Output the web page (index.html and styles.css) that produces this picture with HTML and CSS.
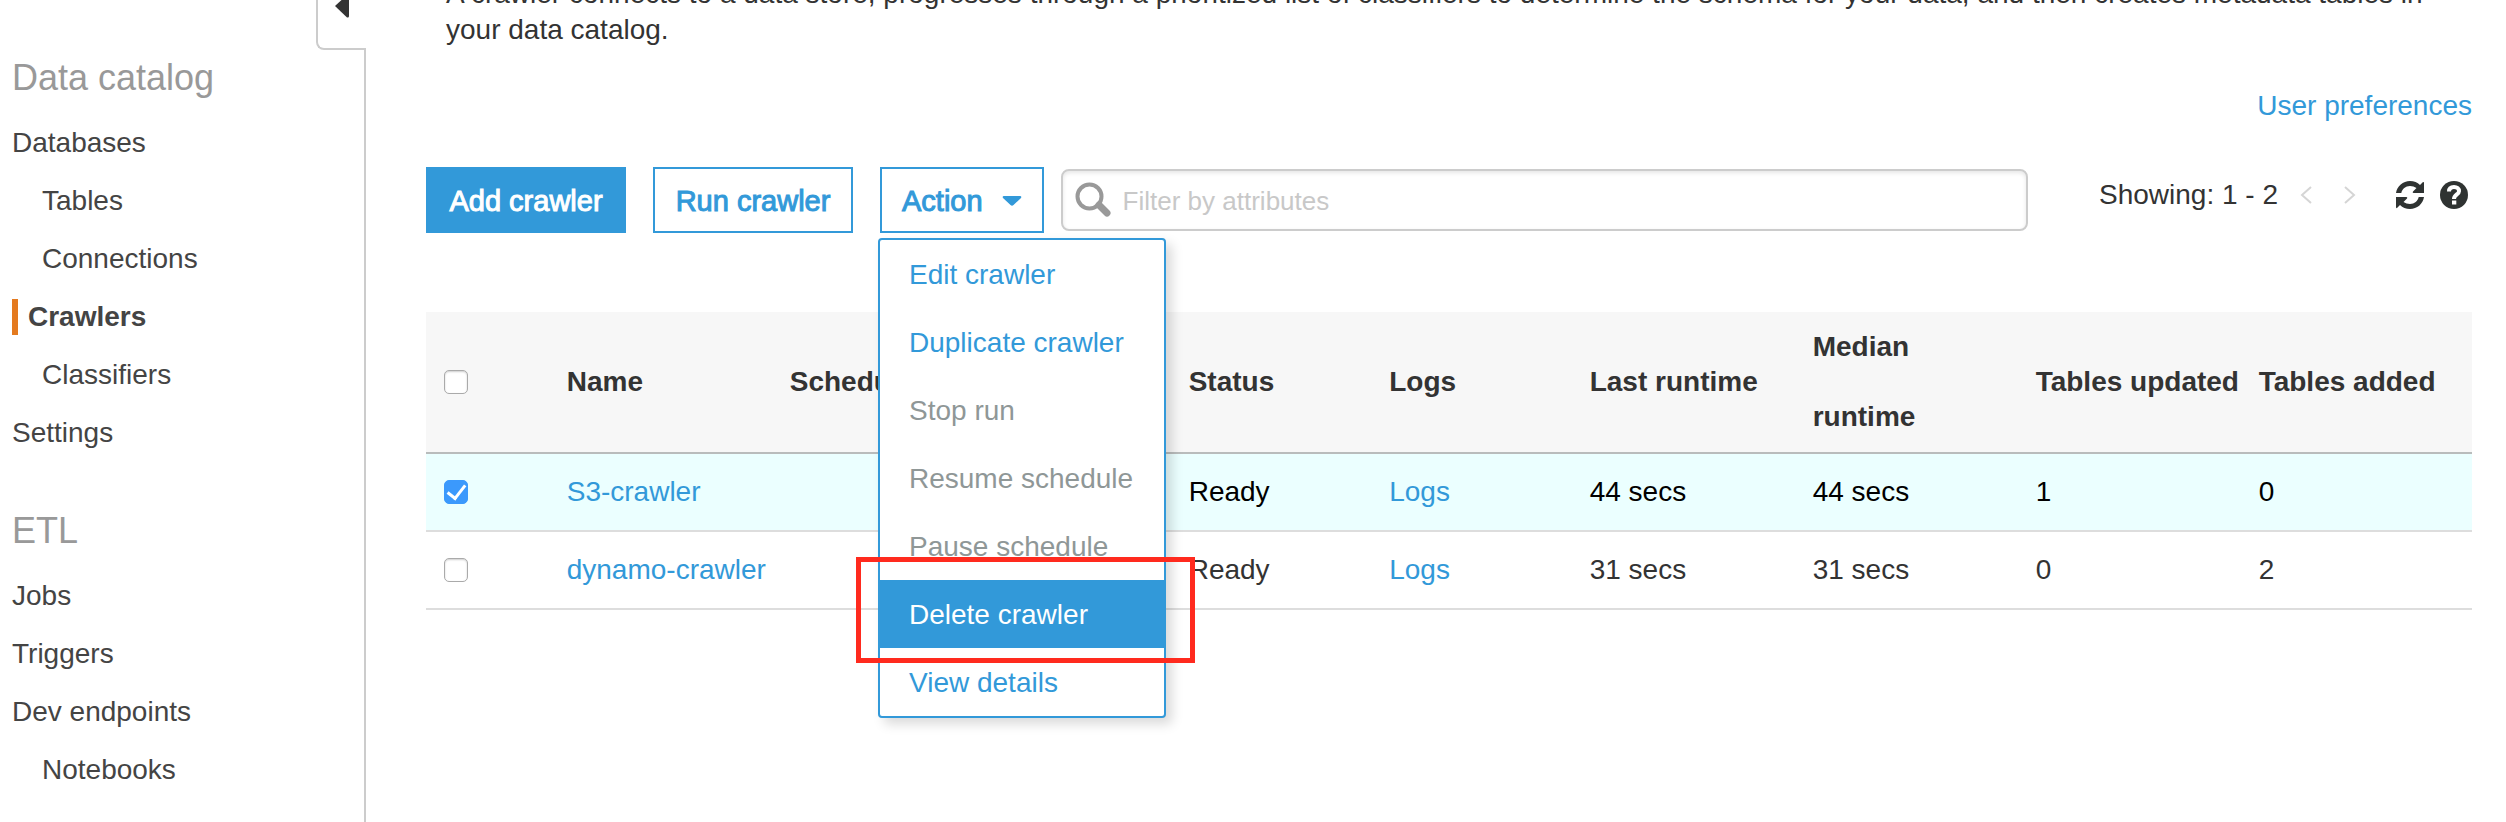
FILE: index.html
```html
<!DOCTYPE html>
<html lang="en">
<head>
<meta charset="utf-8">
<title>Crawlers</title>
<link rel="stylesheet" href="styles.css">
</head>
<body>
<div class="app">
  <aside class="sidebar">
    <div class="sidebar-top">
      <button class="collapse" type="button" aria-label="Collapse navigation">
        <svg width="14" height="24" viewBox="0 0 14 24"><path d="M0 12 12 1Q14 0 14 2V22Q14 24 12 23.500Z" fill="#333"/></svg>
      </button>
    </div>
    <nav class="nav">
      <h2 class="nav-title">Data catalog</h2>
      <ul class="nav-list">
        <li><a href="#databases">Databases</a></li>
        <li class="sub"><a href="#tables">Tables</a></li>
        <li class="sub"><a href="#connections">Connections</a></li>
        <li class="current"><a href="#crawlers" aria-current="page">Crawlers</a></li>
        <li class="sub"><a href="#classifiers">Classifiers</a></li>
        <li><a href="#settings">Settings</a></li>
      </ul>
      <h2 class="nav-title">ETL</h2>
      <ul class="nav-list">
        <li><a href="#jobs">Jobs</a></li>
        <li><a href="#triggers">Triggers</a></li>
        <li><a href="#dev-endpoints">Dev endpoints</a></li>
        <li class="sub"><a href="#notebooks">Notebooks</a></li>
      </ul>
    </nav>
  </aside>

  <main class="main">
    <p class="description">A crawler connects to a data store, progresses through a prioritized list of classifiers to determine the schema for your data, and then creates metadata tables in your data catalog.</p>
    <div class="preferences"><a href="#preferences">User preferences</a></div>

    <div class="toolbar">
      <button class="btn btn-primary" type="button">Add crawler</button>
      <button class="btn" type="button">Run crawler</button>
      <div class="action">
        <button class="btn btn-action" type="button" aria-expanded="true">Action
          <svg width="20" height="10" viewBox="0 0 20 10"><path d="M2 0H18Q20 0 19 2L11.500 9Q10 10.500 8.500 9L1 2Q0 0 2 0Z" fill="currentColor"/></svg>
        </button>
        <ul class="menu">
          <li><button type="button">Edit crawler</button></li>
          <li><button type="button">Duplicate crawler</button></li>
          <li><button type="button" disabled>Stop run</button></li>
          <li><button type="button" disabled>Resume schedule</button></li>
          <li><button type="button" disabled>Pause schedule</button></li>
          <li class="marked"><button class="active" type="button">Delete crawler</button></li>
          <li><button type="button">View details</button></li>
        </ul>
      </div>
      <label class="search">
        <svg width="36" height="36" viewBox="0 0 36 36" fill="none" stroke="#999"><circle cx="14.500" cy="14.500" r="12" stroke-width="4"/><path d="M24 23 32 31" stroke-width="7" stroke-linecap="round"/></svg>
        <input type="text" placeholder="Filter by attributes" aria-label="Filter by attributes">
      </label>
      <div class="pager">
        <span>Showing: 1 - 2</span>
        <div class="pager-arrows">
          <button type="button" aria-label="Previous page"><svg width="12" height="20" viewBox="0 0 12 20"><path d="M11 2 2 10 11 18" fill="none" stroke="#d5d5d5" stroke-width="2"/></svg></button>
          <button type="button" aria-label="Next page"><svg width="12" height="20" viewBox="0 0 12 20"><path d="M1 2 10 10 1 18" fill="none" stroke="#d5d5d5" stroke-width="2"/></svg></button>
        </div>
        <div class="pager-tools">
          <button type="button" aria-label="Refresh"><svg width="28" height="28" viewBox="0 0 28 28" fill="#2f3332"><path d="M0 12C1 5 7 0 14 0c4 0 7.500 1.500 10 4l3-3q1-.5 1 1V12H17.500q-1.500-.5-.5-1.500l3.500-3.500C18.500 5.800 16.500 5 14 5 9.500 5 6.200 8 5.300 12Z"/><path d="M28 16C27 23 21 28 14 28c-4 0-7.500-1.500-10-4l-3 3q-1 .5-1-1V16H10.500q1.500.5.5 1.500l-3.500 3.500C9.500 22.200 11.500 23 14 23c4.500 0 7.800-3 8.700-7Z"/></svg></button>
          <button type="button" aria-label="Help"><svg width="28" height="28" viewBox="0 0 28 28"><circle cx="14" cy="14" r="14" fill="#2f3332"/><path d="M9 10.500C9 7.500 11 6 14 6s5 1.600 5 4.200c0 3.200-5 3.300-5 7.800" fill="none" stroke="#fff" stroke-width="4"/><path d="M12 19.500h4.300v4H12z" fill="#fff"/></svg></button>
        </div>
      </div>
    </div>

    <table class="crawlers">
      <colgroup>
        <col class="c-check"><col class="c-wide"><col class="c-schedule"><col class="c-mid"><col class="c-mid"><col class="c-wide"><col class="c-wide"><col class="c-wide"><col>
      </colgroup>
      <thead>
        <tr>
          <th><input type="checkbox" aria-label="Select all crawlers"></th>
          <th>Name</th><th>Schedule</th><th>Status</th><th>Logs</th><th>Last runtime</th><th>Median<br>runtime</th><th>Tables updated</th><th>Tables added</th>
        </tr>
      </thead>
      <tbody>
        <tr class="selected">
          <td><input type="checkbox" aria-label="Select S3-crawler" checked></td>
          <td><a href="#s3-crawler">S3-crawler</a></td><td></td><td>Ready</td><td><a href="#s3-logs">Logs</a></td><td>44 secs</td><td>44 secs</td><td>1</td><td>0</td>
        </tr>
        <tr>
          <td><input type="checkbox" aria-label="Select dynamo-crawler"></td>
          <td><a href="#dynamo-crawler">dynamo-crawler</a></td><td></td><td>Ready</td><td><a href="#dynamo-logs">Logs</a></td><td>31 secs</td><td>31 secs</td><td>0</td><td>2</td>
        </tr>
      </tbody>
    </table>
  </main>
</div>
</body>
</html>
```
FILE: styles.css
```css
* {
  box-sizing: border-box;
}

body {
  margin: 0;
  overflow: hidden;
  background: #fff;
  color: #333;
  font: 28px/36px "Liberation Sans", Arial, sans-serif;
}

a {
  color: #3299d9;
  text-decoration: none;
}

button {
  margin: 0;
  padding: 0;
  border: 0;
  background: none;
  color: inherit;
  font: inherit;
}

svg {
  display: block;
  flex: none;
}

ul {
  margin: 0;
  padding: 0;
  list-style: none;
}

.app {
  display: flex;
  min-height: 100vh;
}

/* Sidebar */
.sidebar {
  display: flex;
  flex: none;
  flex-direction: column;
  width: 366px;
}

.sidebar-top {
  display: flex;
  justify-content: flex-end;
}

.collapse {
  display: flex;
  justify-content: center;
  width: 50px;
  height: 50px;
  border: 2px solid #ccc;
  border-width: 0 0 2px 2px;
  border-bottom-left-radius: 8px;
}

.collapse svg {
  margin-top: -6px;
}

.nav {
  flex: 1;
  padding: 6px 12px 0;
  border-right: 2px solid #ccc;
}

.nav-title {
  margin: 0 0 14px;
  color: #999;
  font-size: 36px;
  font-weight: 400;
  line-height: 44px;
}

.nav-list {
  line-height: 58px;
}

.nav-list + .nav-title {
  margin-top: 47px;
}

.nav-list a {
  color: #444;
}

.sub {
  padding-left: 30px;
}

.current {
  display: flex;
  align-items: center;
  gap: 10px;
  font-weight: 700;
}

.current::before {
  width: 6px;
  height: 36px;
  background: #e47a1f;
  content: "";
}

/* Main column */
.main {
  display: flow-root;
  flex: 1;
  min-width: 0;
  padding: 0 34px 0 60px;
}

.description {
  margin: -24px 0 40px;
  padding: 0 20px;
}

.preferences {
  text-align: right;
}

.toolbar {
  display: flex;
  align-items: center;
  gap: 27px;
  margin: 43px 0 79px;
}

.btn {
  min-width: 200px;
  height: 66px;
  padding-top: 2px;
  border: 2px solid #3299d9;
  background: #fff;
  color: #3299d9;
  font-size: 29px;
  -webkit-text-stroke: 1px;
}

.btn-primary {
  background: #3299d9;
  color: #fff;
}

.action {
  position: relative;
}

.btn-action {
  display: flex;
  align-items: center;
  gap: 19px;
  min-width: 0;
  padding: 2px 20px 0;
}

.menu {
  position: absolute;
  z-index: 2;
  top: 71px;
  left: -2px;
  min-width: 288px;
  border: 2px solid #3299d9;
  border-radius: 4px;
  background: #fff;
  box-shadow: 6px 6px 12px rgba(0, 0, 0, 0.15);
}

.menu button {
  display: block;
  width: 100%;
  height: 68px;
  padding: 2px 28px 0 29px;
  color: #3299d9;
  text-align: left;
  white-space: nowrap;
}

.menu button:disabled {
  color: #8f9797;
}

.menu .active {
  background: #3299d9;
  color: #fff;
}

.marked {
  position: relative;
}

.marked::after {
  position: absolute;
  inset: -23px -31px -15px -24px;
  border: 5px solid #ff2a1e;
  content: "";
  pointer-events: none;
}

.search {
  display: flex;
  flex: 1;
  align-items: center;
  gap: 12px;
  height: 62px;
  margin-left: -10px;
  padding: 0 12px;
  border: 2px solid #ccc;
  border-radius: 8px;
  box-shadow: inset 0 2px 4px rgba(0, 0, 0, 0.1);
}

.search input {
  flex: 1;
  min-width: 0;
  padding: 2px 0 0;
  border: 0;
  outline: 0;
  background: none;
  color: #333;
  font: inherit;
  font-size: 26px;
}

.search input::placeholder {
  color: #c8c8c8;
  opacity: 1;
}

.pager {
  display: flex;
  align-items: center;
  margin-left: 44px;
  padding: 0 4px 10px 0;
  white-space: nowrap;
}

.pager-arrows {
  display: flex;
  gap: 32px;
  margin: 0 40px 0 22px;
}

.pager-tools {
  display: flex;
  gap: 16px;
}

/* Table */
.crawlers {
  width: 100%;
  border-collapse: separate;
  border-spacing: 0;
  table-layout: fixed;
}

.c-check {
  width: 5.9%;
}

.c-wide {
  width: 10.9%;
}

.c-schedule {
  width: 19.5%;
}

.c-mid {
  width: 9.8%;
}

th,
td {
  padding: 0 0 0 20px;
  text-align: left;
  white-space: nowrap;
}

th:first-child,
td:first-child {
  padding-left: 18px;
}

th {
  height: 142px;
  border-bottom: 2px solid #b9bcbc;
  background: #f7f7f7;
  line-height: 70px;
}

td {
  height: 78px;
  border-bottom: 2px solid #ddd;
}

.selected {
  background: #ebffff;
  color: #000;
}

input[type="checkbox"] {
  display: flex;
  align-items: center;
  justify-content: center;
  width: 24px;
  height: 24px;
  margin: 0;
  border: 1px solid #aaa;
  border-radius: 5px;
  background: #fff;
  box-shadow: inset 0 1px 2px rgba(0, 0, 0, 0.2);
  appearance: none;
}

input[type="checkbox"]:checked {
  border-color: #3b99fc;
  background: #3b99fc;
  box-shadow: none;
}

input[type="checkbox"]:checked::before {
  width: 8px;
  height: 15px;
  margin-bottom: 4px;
  border: solid #fff;
  border-width: 0 3px 3px 0;
  content: "";
  transform: rotate(38deg);
}
```
